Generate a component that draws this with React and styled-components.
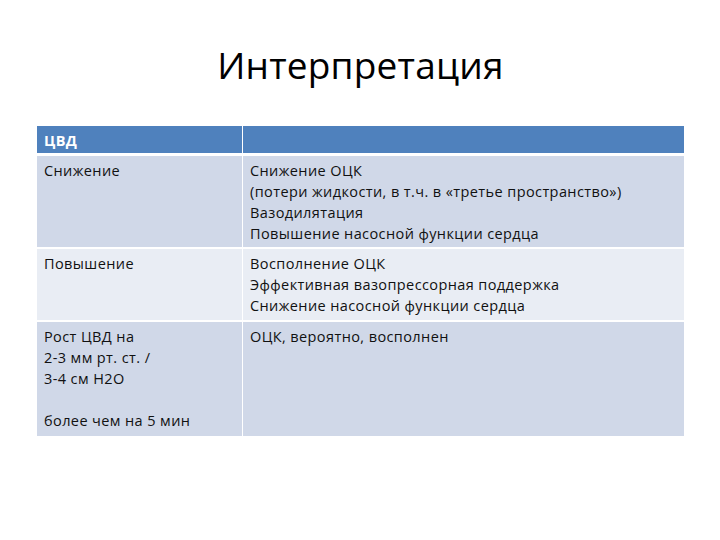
import React from "react";
import styled, { createGlobalStyle } from "styled-components";

const Global = createGlobalStyle`
  html, body { margin: 0; padding: 0; background: #ffffff; }
  body { font-family: "Open Sans", "Liberation Sans", sans-serif; }
`;

const Slide = styled.div`
  width: 720px;
  height: 540px;
  box-sizing: border-box;
  padding: 0 36px 0 37px;
  display: flex;
  flex-direction: column;
`;

const Title = styled.h1`
  margin: 0;
  height: 126px;
  box-sizing: border-box;
  padding-top: 40px;
  text-align: center;
  font-family: "Open Sans", "Liberation Sans", sans-serif;
  font-weight: 400;
  font-size: 37px;
  line-height: 50px;
  color: #000;
  letter-spacing: 0.2px;
`;

const Table = styled.div`
  display: grid;
  grid-template-columns: 205px 1fr;
  column-gap: 1px;
  width: 647px;
`;

const Cell = styled.div`
  box-sizing: border-box;
  padding: 4px 7px;
  background: ${(p) => (p.$head ? "#4f81bd" : p.$alt ? "#e9edf4" : "#d0d8e8")};
  color: ${(p) => (p.$head ? "#ffffff" : "#111")};
  font-weight: ${(p) => (p.$head ? 700 : 400)};
  font-size: 14.5px;
  letter-spacing: 0.4px;
  line-height: 21px;
  height: ${(p) => p.$h}px;
  margin-bottom: ${(p) => p.$gap}px;
  white-space: pre-line;
`;

const rows = [
  {
    h: 91,
    gap: 2,
    alt: false,
    left: "Снижение",
    right:
      "Снижение ОЦК\n(потери жидкости, в т.ч. в «третье пространство»)\nВазодилятация\nПовышение насосной функции сердца",
  },
  {
    h: 71,
    gap: 2,
    alt: true,
    left: "Повышение",
    right:
      "Восполнение ОЦК\nЭффективная вазопрессорная поддержка\nСнижение насосной функции сердца",
  },
  {
    h: 114,
    gap: 0,
    alt: false,
    left: "Рост ЦВД на\n2-3 мм рт. ст. /\n3-4 см H2O\n\nболее чем на 5 мин",
    right: "ОЦК, вероятно, восполнен",
  },
];

export default function App() {
  return (
    <>
      <Global />
      <Slide>
        <Title>Интерпретация</Title>
        <Table>
          <Cell $head $h={27} $gap={3}>ЦВД</Cell>
          <Cell $head $h={27} $gap={3}></Cell>
          {rows.map((r, i) => (
            <React.Fragment key={i}>
              <Cell $alt={r.alt} $h={r.h} $gap={r.gap}>{r.left}</Cell>
              <Cell $alt={r.alt} $h={r.h} $gap={r.gap}>{r.right}</Cell>
            </React.Fragment>
          ))}
        </Table>
      </Slide>
    </>
  );
}
